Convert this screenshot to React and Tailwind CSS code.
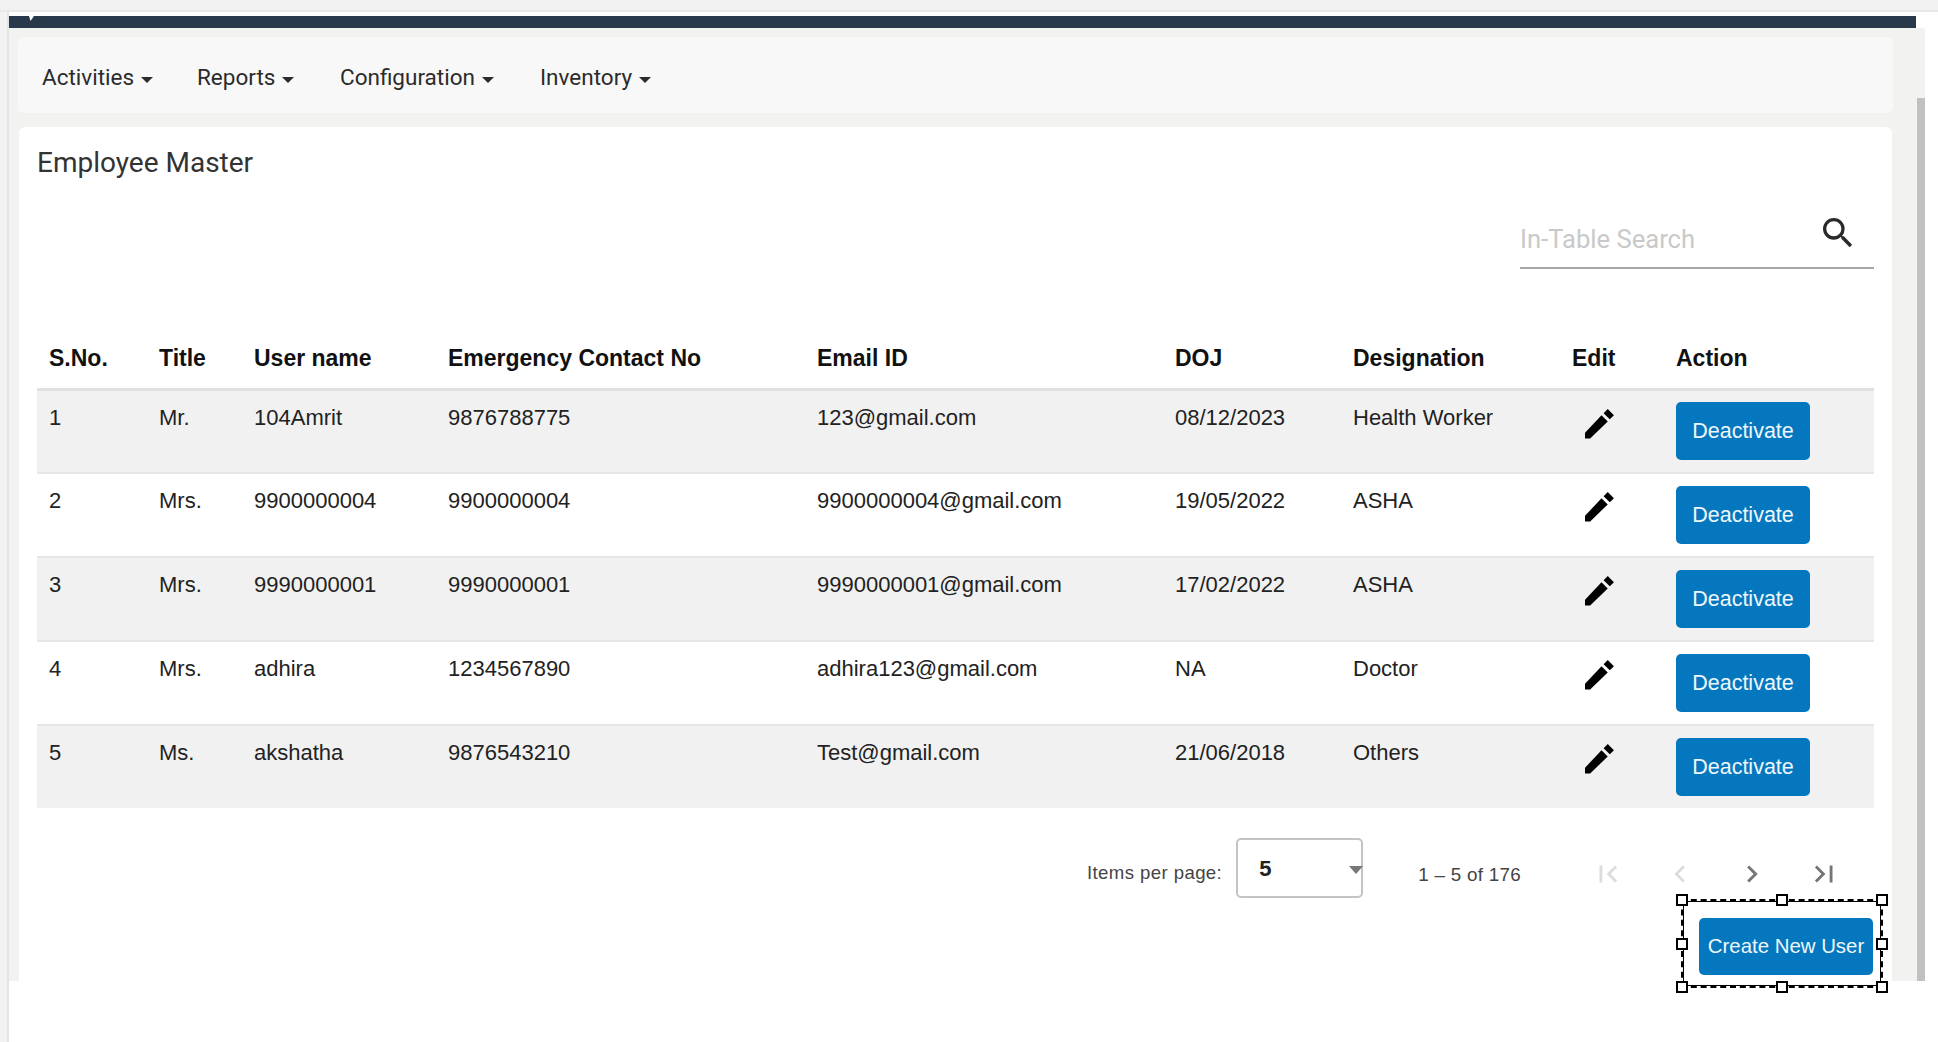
import { MdSearch, MdFirstPage, MdChevronLeft, MdChevronRight, MdLastPage } from 'react-icons/md';

const EMPLOYEES = [
  { sno: 1, title: 'Mr.', user: '104Amrit', phone: '9876788775', email: '123@gmail.com', doj: '08/12/2023', role: 'Health Worker' },
  { sno: 2, title: 'Mrs.', user: '9900000004', phone: '9900000004', email: '9900000004@gmail.com', doj: '19/05/2022', role: 'ASHA' },
  { sno: 3, title: 'Mrs.', user: '9990000001', phone: '9990000001', email: '9990000001@gmail.com', doj: '17/02/2022', role: 'ASHA' },
  { sno: 4, title: 'Mrs.', user: 'adhira', phone: '1234567890', email: 'adhira123@gmail.com', doj: 'NA', role: 'Doctor' },
  { sno: 5, title: 'Ms.', user: 'akshatha', phone: '9876543210', email: 'Test@gmail.com', doj: '21/06/2018', role: 'Others' },
];

const COLUMNS = ['S.No.', 'Title', 'User name', 'Emergency Contact No', 'Email ID', 'DOJ', 'Designation', 'Edit', 'Action'];

const NAV_ITEMS = [
  { label: 'Activities', cls: 'w-[155px]' },
  { label: 'Reports', cls: 'w-[143px]' },
  { label: 'Configuration', cls: 'w-[200px]' },
  { label: 'Inventory', cls: '' },
];

const Handle = ({ cls }) => (
  <span className={`absolute w-[12px] h-[12px] bg-white border-[2.5px] border-black ${cls}`}></span>
);

const PencilIcon = () => (
  <svg width="31" height="31" viewBox="0 0 30 30" className="text-black" fill="currentColor">
    <path d="M0 24 16 7l6 6L5 29.5H0z" />
    <path d="M18 5l4-4 6 6-4 4z" />
  </svg>
);

const Row = ({ row, index }) => {
  const cell = 'pl-3 pt-[13px] align-top';
  return (
    <tr className={`h-[84px] last:h-[83px] border-b-2 border-[#e6e6e6] last:border-b-0 ${index % 2 === 0 ? 'bg-[#f1f1f1]' : 'bg-white'}`}>
      <td className={cell}>{row.sno}</td>
      <td className={cell}>{row.title}</td>
      <td className={cell}>{row.user}</td>
      <td className={cell}>{row.phone}</td>
      <td className={cell}>{row.email}</td>
      <td className={cell}>{row.doj}</td>
      <td className={cell}>{row.role}</td>
      <td className="pl-[25px] pt-[17px] align-top">
        <PencilIcon />
      </td>
      <td className="pl-3 align-middle">
        <button className="w-[134px] h-[58px] rounded-[5px] bg-[#0577be] text-[#eef7fc] text-[21.5px]">Deactivate</button>
      </td>
    </tr>
  );
};

export default function App() {
  return (
    <div className="w-[1938px] h-[1042px] bg-white overflow-hidden flex flex-col text-[#222] [font-family:'Liberation_Sans',sans-serif]">
      {/* browser strip */}
      <div className="h-[12px] shrink-0 bg-[#f2f2f2] border-b-2 border-[#e8e8e8]"></div>

      <div className="flex-1 flex">
        <div className="w-[9px] shrink-0 bg-[#f2f2f2] border-r-2 border-[#e4e4e4]"></div>

        <div className="w-[1916px] flex flex-col">
          <div className="h-[4px] shrink-0 bg-white"></div>
          <div className="h-[12px] w-[1907px] shrink-0 bg-[#27394a] pl-5">
            <div className="w-[5px] h-[5px] bg-white [clip-path:polygon(0_0,100%_0,30%_100%)]"></div>
          </div>

          <div className="h-[953px] shrink-0 flex bg-[#f2f2f0]">
            <div className="w-[1908px] pl-[9px] pr-6 pt-[9px] flex flex-col gap-[14px]">
              {/* top menu */}
              <nav className="h-[76px] shrink-0 bg-[#f8f8f8] rounded-md flex items-center pl-6 pt-[5px] text-[22.5px] text-[#2b2b2b] font-['Roboto']">
                {NAV_ITEMS.map((item) => (
                  <div key={item.label} className={`flex items-center gap-[7px] ${item.cls}`}>
                    <span>{item.label}</span>
                    <span className="w-0 h-0 mt-1 border-x-[6px] border-t-[6px] border-x-transparent border-t-[#2b2b2b]"></span>
                  </div>
                ))}
              </nav>

              {/* employee card */}
              <section className="flex-1 ml-[1px] mr-[1px] bg-white rounded-t-md pl-[18px] pr-[18px] flex flex-col">
                <h2 className="pt-[20px] h-[68px] text-[28px] leading-[32px] text-[#333] font-['Roboto']">Employee Master</h2>

                <div className="flex justify-end">
                  <div className="w-[354px] h-[74px] border-b-2 border-[#a6a6a6] flex items-start justify-between pr-[16px]">
                    <span className="mt-[29px] text-[25.6px] leading-[30px] text-[#c9c9c9] font-['Roboto']">In-Table Search</span>
                    <MdSearch size={40} className="mt-[18px] text-[#2a2a2a]" />
                  </div>
                </div>

                <table className="w-[1837px] mt-[65px] table-fixed text-[22px] leading-[28px] border-collapse">
                  <colgroup>
                    <col className="w-[110px]" />
                    <col className="w-[95px]" />
                    <col className="w-[194px]" />
                    <col className="w-[369px]" />
                    <col className="w-[358px]" />
                    <col className="w-[178px]" />
                    <col className="w-[219px]" />
                    <col className="w-[104px]" />
                    <col />
                  </colgroup>
                  <thead>
                    <tr className="h-[55px] border-b-[3px] border-[#e0e0e0]">
                      {COLUMNS.map((col) => (
                        <th key={col} className="pl-3 pb-[6px] text-left text-[23px] font-bold text-[#111]">{col}</th>
                      ))}
                    </tr>
                  </thead>
                  <tbody>
                    {EMPLOYEES.map((row, index) => (
                      <Row key={row.sno} row={row} index={index} />
                    ))}
                  </tbody>
                </table>

                {/* paginator */}
                <div className="mt-[30px] h-[60px] shrink-0 flex items-center justify-end pr-[14px] text-[#444]">
                  <span className="mt-[9px] text-[18.6px] tracking-[0.4px]">Items per page:</span>
                  <div className="ml-[14px] w-[127px] h-[60px] border-2 border-[#c4c4c4] rounded-[5px] flex items-center justify-between pl-[21px] text-[#222]">
                    <span className="text-[22px] font-bold">5</span>
                    <span className="w-0 h-0 mt-[3px] -mr-[2px] border-x-[7px] border-t-[8px] border-x-transparent border-t-[#777]"></span>
                  </div>
                  <span className="ml-[55px] mr-[51px] mt-[14px] text-[18.8px] tracking-[0.3px]">1 – 5 of 176</span>
                  <div className="flex items-center mt-[12px]">
                    <MdFirstPage size={34} className="w-[72px] text-[#dcdcdc]" />
                    <MdChevronLeft size={34} className="w-[72px] text-[#dcdcdc]" />
                    <MdChevronRight size={34} className="w-[72px] text-[#757575]" />
                    <MdLastPage size={34} className="w-[72px] text-[#757575]" />
                  </div>
                </div>

                {/* selected create button */}
                <div className="flex justify-end -mr-[9px] mt-[1px]">
                  <div className="relative w-[202px] h-[89px] border-2 border-dashed border-black pt-[17px] pl-4">
                    <span className="absolute inset-0 border border-black"></span>
                    <button className="relative w-[174px] h-[57px] rounded-[5px] bg-[#0577be] text-[#eef7fc] text-[20.4px]">Create New User</button>
                    <Handle cls="-top-[7px] -left-[7px]" />
                    <Handle cls="-top-[7px] left-[93px]" />
                    <Handle cls="-top-[7px] -right-[7px]" />
                    <Handle cls="top-[37px] -left-[7px]" />
                    <Handle cls="top-[37px] -right-[7px]" />
                    <Handle cls="-bottom-[7px] -left-[7px]" />
                    <Handle cls="-bottom-[7px] left-[93px]" />
                    <Handle cls="-bottom-[7px] -right-[7px]" />
                  </div>
                </div>
              </section>
            </div>

            {/* scrollbar */}
            <div className="w-[8px] pt-[70px] flex">
              <div className="flex-1 bg-[#c1c1c1]"></div>
            </div>
          </div>
        </div>
      </div>
    </div>
  );
}
